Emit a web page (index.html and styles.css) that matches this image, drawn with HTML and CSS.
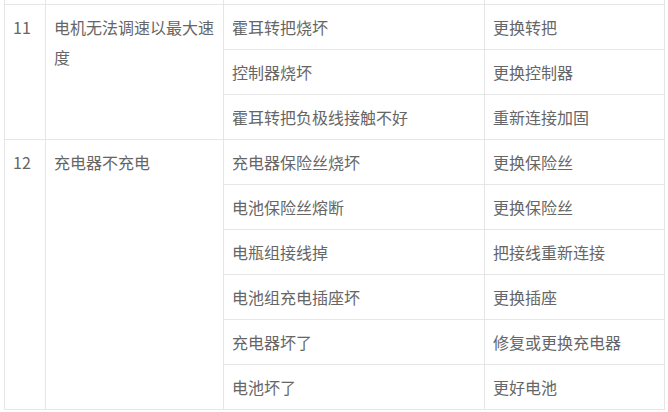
FILE: index.html
```html
<!DOCTYPE html>
<html lang="zh-CN">
<head>
<meta charset="utf-8">
<title>故障表</title>
<link rel="stylesheet" href="styles.css">
</head>
<body>
<table class="fault-table">
  <colgroup>
    <col class="c-no">
    <col class="c-fault">
    <col class="c-cause">
    <col class="c-fix">
  </colgroup>
  <tbody>
    <tr class="spill"><td></td><td></td><td></td><td></td></tr>
    <tr>
      <td rowspan="3">11</td>
      <td rowspan="3">电机无法调速以最大速度</td>
      <td>霍耳转把烧坏</td>
      <td>更换转把</td>
    </tr>
    <tr><td>控制器烧坏</td><td>更换控制器</td></tr>
    <tr><td>霍耳转把负极线接触不好</td><td>重新连接加固</td></tr>
    <tr>
      <td rowspan="6">12</td>
      <td rowspan="6">充电器不充电</td>
      <td>充电器保险丝烧坏</td>
      <td>更换保险丝</td>
    </tr>
    <tr><td>电池保险丝熔断</td><td>更换保险丝</td></tr>
    <tr><td>电瓶组接线掉</td><td>把接线重新连接</td></tr>
    <tr><td>电池组充电插座坏</td><td>更换插座</td></tr>
    <tr><td>充电器坏了</td><td>修复或更换充电器</td></tr>
    <tr><td>电池坏了</td><td>更好电池</td></tr>
  </tbody>
</table>
</body>
</html>
```
FILE: styles.css
```css
html, body {
  margin: 0;
  padding: 0;
  background: #fff;
}
body {
  padding: 0 4px;
  font-family: "Noto Sans CJK SC", "Noto Sans", sans-serif;
  font-size: 16px;
  color: #666;
}
.fault-table {
  border-collapse: collapse;
  table-layout: fixed;
  width: 660px;
}
.c-no { width: 41px; }
.c-fault { width: 178px; }
.c-cause { width: 261px; }
.c-fix { width: 180px; }
.fault-table td {
  border: 1px solid #e6e6e6;
  padding: 7px 8px;
  line-height: 30px;
  vertical-align: top;
  text-align: left;
}
.fault-table .spill td {
  border-top: none;
  padding: 0;
  height: 4px;
  line-height: 4px;
}
```
